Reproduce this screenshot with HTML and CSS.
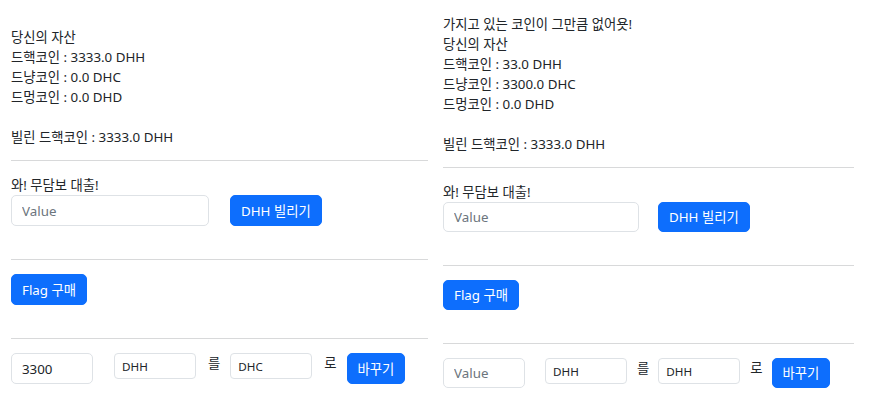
FILE: index.html
```html
<!DOCTYPE html>
<html lang="ko">
<head>
<meta charset="utf-8">
<title>코인</title>
<link rel="stylesheet" href="styles.css">
</head>
<body>
<div class="screens">
  <section class="panel panel-a">
    <div class="line">당신의 자산</div>
    <div class="line">드핵코인 : 3333.0 DHH</div>
    <div class="line">드냥코인 : 0.0 DHC</div>
    <div class="line">드멍코인 : 0.0 DHD</div>
    <div class="line"></div>
    <div class="line">빌린 드핵코인 : 3333.0 DHH</div>
    <hr class="rule">
    <div class="line">와! 무담보 대출!</div>
    <div class="loan-row">
      <input class="field field-loan" type="text" placeholder="Value">
      <button class="btn">DHH 빌리기</button>
    </div>
    <div class="spacer"></div>
    <hr class="rule">
    <button class="btn">Flag 구매</button>
    <div class="spacer"></div>
    <hr class="rule">
    <div class="swap-row">
      <input class="field field-amount" type="text" value="3300" placeholder="Value">
      <input class="field field-sm field-from" type="text" value="DHH">
      <span class="word">를</span>
      <input class="field field-sm" type="text" value="DHC">
      <span class="word">로</span>
      <button class="btn">바꾸기</button>
    </div>
  </section>
  <section class="panel panel-b">
    <div class="line">가지고 있는 코인이 그만큼 없어욧!</div>
    <div class="line">당신의 자산</div>
    <div class="line">드핵코인 : 33.0 DHH</div>
    <div class="line">드냥코인 : 3300.0 DHC</div>
    <div class="line">드멍코인 : 0.0 DHD</div>
    <div class="line"></div>
    <div class="line">빌린 드핵코인 : 3333.0 DHH</div>
    <hr class="rule">
    <div class="line">와! 무담보 대출!</div>
    <div class="loan-row">
      <input class="field field-loan" type="text" placeholder="Value">
      <button class="btn">DHH 빌리기</button>
    </div>
    <div class="spacer"></div>
    <hr class="rule">
    <button class="btn">Flag 구매</button>
    <div class="spacer"></div>
    <hr class="rule">
    <div class="swap-row">
      <input class="field field-amount" type="text" placeholder="Value">
      <input class="field field-sm field-from" type="text" value="DHH">
      <span class="word">를</span>
      <input class="field field-sm" type="text" value="DHH">
      <span class="word">로</span>
      <button class="btn">바꾸기</button>
    </div>
  </section>
</div>
</body>
</html>
```
FILE: styles.css
```css
* { box-sizing: border-box; }

html, body {
  margin: 0;
  padding: 0;
  background: #ffffff;
}

body {
  font-family: "Noto Sans", "Noto Sans CJK KR", sans-serif;
  font-size: 13.33px;
  line-height: 20px;
  color: #212529;
}

.screens {
  display: flex;
  align-items: flex-start;
}

.panel {
  display: flex;
  flex-direction: column;
  align-items: flex-start;
}

.panel-a {
  width: 428px;
  padding: 27px 0 0 11px;
}

.panel-b {
  width: 426px;
  padding: 14px 0 0 15px;
}

.line {
  height: 20px;
  white-space: nowrap;
}

.rule {
  align-self: stretch;
  margin: 13px 0 14px;
  border: 0;
  border-top: 1px solid #d8d9da;
  height: 0;
}

.spacer {
  height: 20px;
}

.loan-row {
  display: flex;
  align-items: center;
  gap: 21px;
}

.swap-row {
  display: flex;
  align-items: flex-start;
}

.field {
  font-family: inherit;
  font-size: 13.33px;
  color: #212529;
  height: 31px;
  padding: 0 10px;
  border: 1px solid #dee2e6;
  border-radius: 5px;
  background: #fff;
  outline: none;
}

.field::placeholder {
  color: #6c757d;
}

.field-loan {
  width: 198px;
}

.field-amount {
  width: 82px;
}

.field-sm {
  width: 82px;
  height: 26px;
  padding: 0 7px;
  font-size: 11.67px;
  border-radius: 4px;
}

.field-from {
  margin-left: 21px;
}

.word {
  line-height: 20px;
  margin: 0 10px 0 12px;
}

.btn {
  font-family: inherit;
  font-size: 13.33px;
  line-height: 20px;
  height: 31px;
  padding: 0 10px;
  color: #fff;
  background: #0d6efd;
  border: 1px solid #0d6efd;
  border-radius: 5px;
  white-space: nowrap;
}

/* second screen was captured at a very slightly smaller scale */
.panel-b .loan-row {
  gap: 19px;
}

.panel-b .field-loan {
  width: 196px;
}

.panel-b .btn,
.panel-b .field-loan,
.panel-b .field-amount {
  height: 30px;
}

.panel-b .field-from {
  margin-left: 20px;
}

.panel-b .word {
  margin: 0 9px 0 10px;
}
```
